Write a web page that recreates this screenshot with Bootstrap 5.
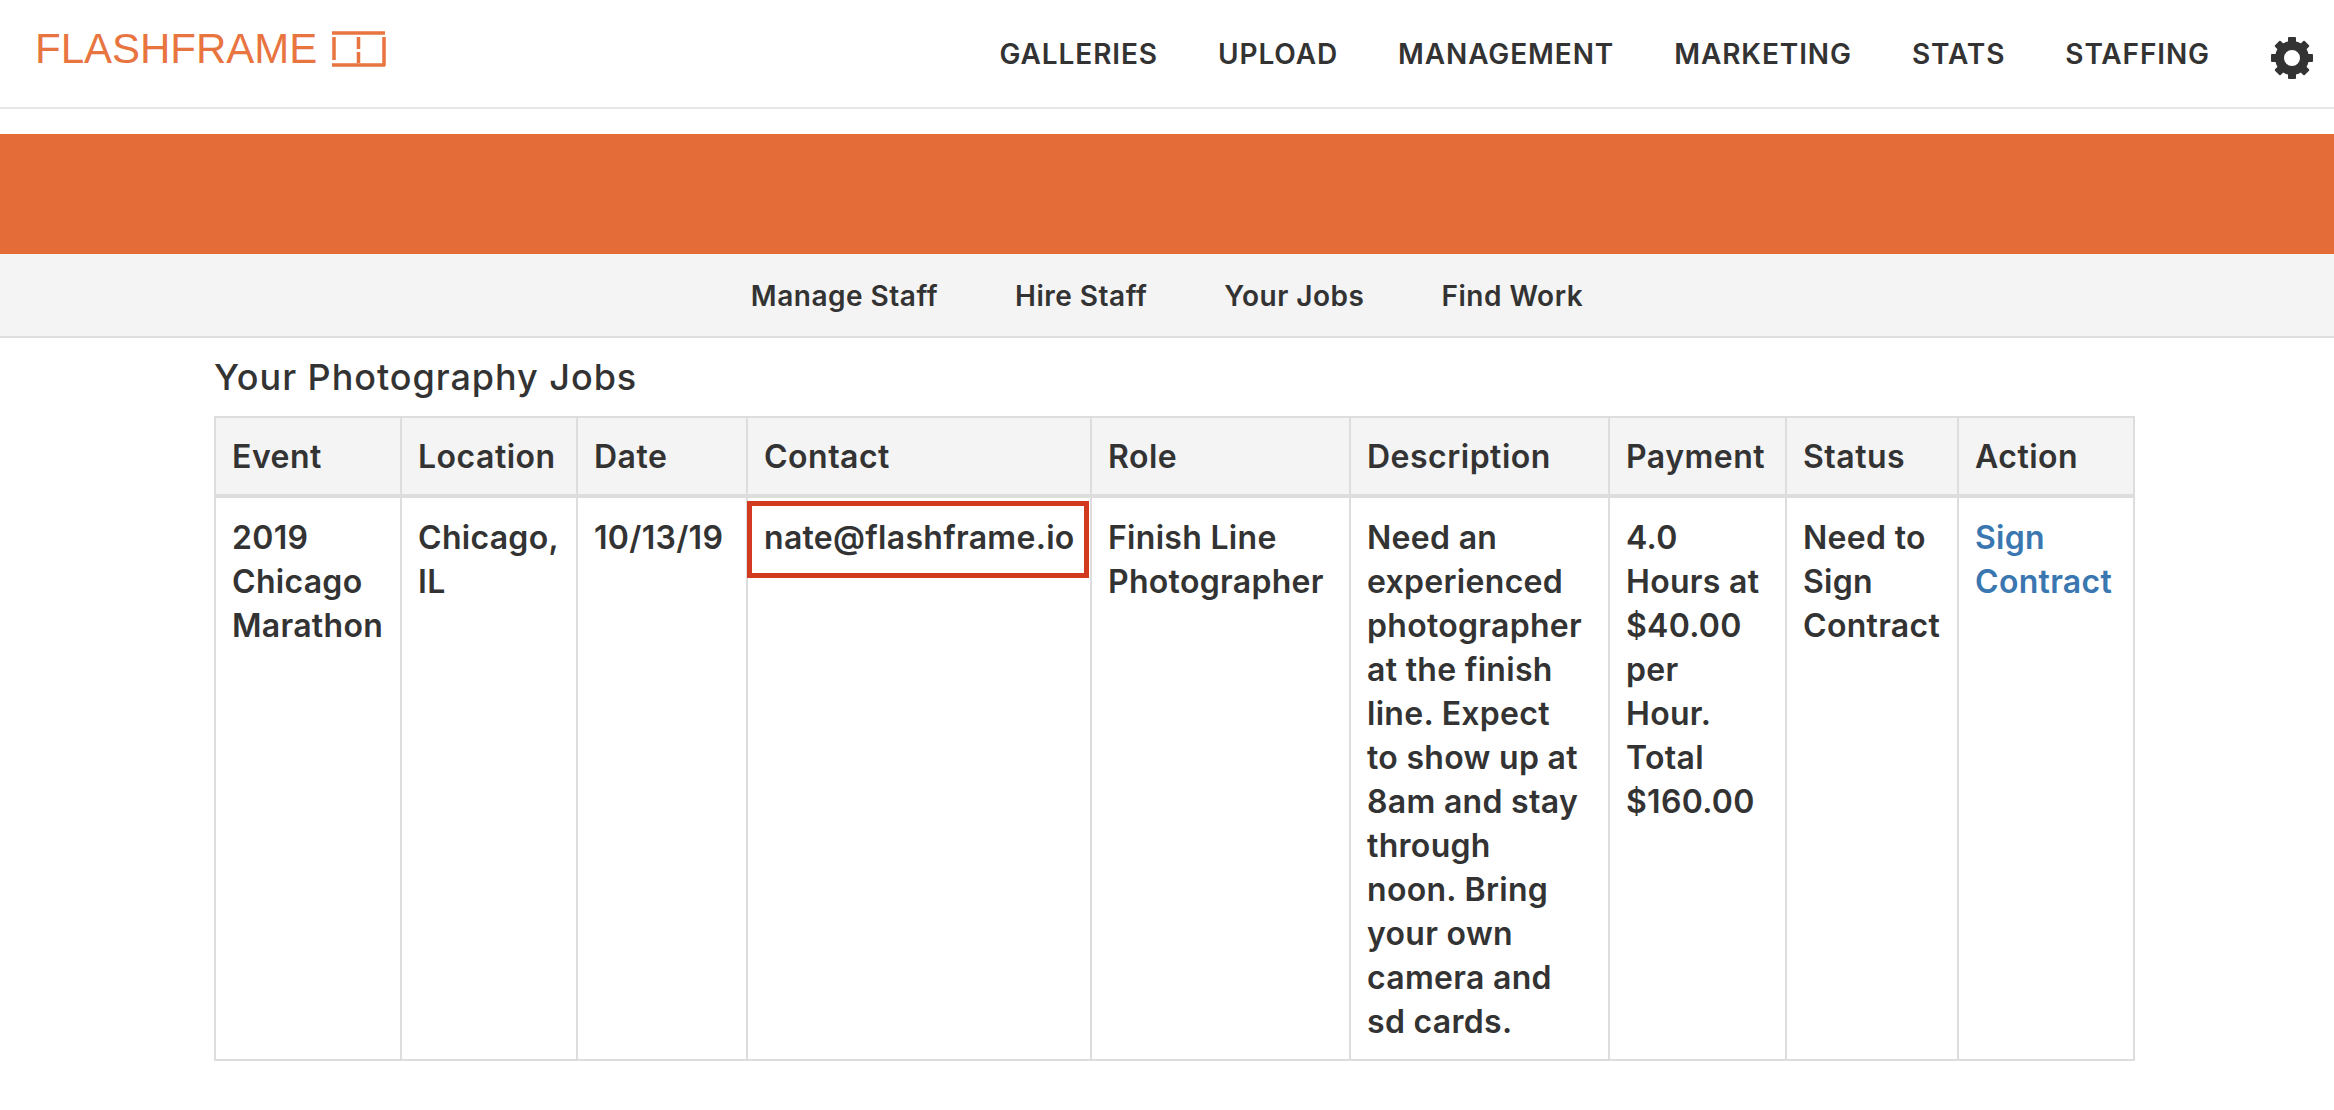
<!DOCTYPE html>
<html lang="en"><head><meta charset="utf-8"><title>Flashframe</title>
<link href="https://cdn.jsdelivr.net/npm/bootstrap@5.3.0/dist/css/bootstrap.min.css" rel="stylesheet">
<style>
body{font-family:Inter,"Liberation Sans",sans-serif;color:#333;background:#fff;font-size:32px;line-height:44px;font-weight:600}
.topbar{height:109px;border-bottom:2px solid #e7e7e7;padding:0 21px 0 35px}
.brand{font-family:"Liberation Sans",Arial,sans-serif;font-size:42px;line-height:48px;color:#e8743f;font-weight:400;text-decoration:none}
.brand-row{padding-top:25px;gap:14px}
.brand-row svg{display:block}
.mainnav{gap:60px;padding-top:32px}
.mainnav a{color:#333;text-decoration:none;font-size:28px;line-height:44px;font-weight:600;letter-spacing:.9px}
.gear{margin-left:1px;margin-top:5px}
.band{height:120px;background:#e36c39;margin-top:25px}
.subnav{height:84px;background:#f4f4f4;border-bottom:2px solid #dedede;gap:77px;padding-top:2px}
.subnav a{color:#333;text-decoration:none;font-size:28px;font-weight:600;letter-spacing:.5px}
.wrap{padding:0 201px 0 214px}
.title{font-size:36px;line-height:40px;font-weight:500;letter-spacing:.95px;margin:19px 0 19px}
.jobs{table-layout:fixed;width:1919px;margin:0;border-color:#ddd;color:#333}
.jobs th,.jobs td{border:2px solid #ddd;padding:18px 17px 15px 16px;font-size:32px;line-height:44px;font-weight:600;letter-spacing:.3px;color:#333;box-shadow:none;background:#fff}
.jobs th{background:#f4f4f4;font-weight:600;letter-spacing:.5px;border-bottom-width:4px;padding:17px 17px 15px 16px}
.jobs td{height:562px;vertical-align:top}
.jobs a{color:#3a77b0;text-decoration:none}
.c1{width:186px}.c2{width:176px}.c3{width:170px}.c4{width:344px}.c5{width:259px}.c6{width:259px}.c7{width:177px}.c8{width:172px}.c9{width:176px}
.hilite{position:absolute;left:-1px;top:3px;width:342px;height:77px;border:5px solid #d23a20;pointer-events:none}
.cell-rel{position:relative}
</style></head>
<body>
<header class="topbar d-flex justify-content-between align-items-start">
  <div class="brand-row d-flex align-items-center">
    <a class="brand" href="#">FLASHFRAME</a>
    <svg width="55" height="36" viewBox="0 0 55 36" fill="none" stroke="#e8743f" stroke-width="3.5"><path d="M1 2H54M53 6V35M1 34H54M3 6V29M27.500 6V18M27.500 21V32"/></svg>
  </div>
  <nav class="mainnav d-flex align-items-start">
    <a href="#">GALLERIES</a><a href="#">UPLOAD</a><a href="#">MANAGEMENT</a><a href="#">MARKETING</a><a href="#">STATS</a><a href="#">STAFFING</a>
    <svg class="gear" width="42" height="42" viewBox="0 0 42 42" fill="#333"><path fill-rule="evenodd" d="M21 4a17 17 0 1 0 0 34a17 17 0 1 0 0-34zM21 13a8 8 0 1 1 0 16a8 8 0 1 1 0-16z"/><g><rect x="17" y="0" width="8" height="7" rx="1"/><rect x="17" y="35" width="8" height="7" rx="1"/><rect x="0" y="17" width="7" height="8" rx="1"/><rect x="35" y="17" width="7" height="8" rx="1"/><rect x="17" y="0" width="8" height="7" rx="1" transform="rotate(45 21 21)"/><rect x="17" y="35" width="8" height="7" rx="1" transform="rotate(45 21 21)"/><rect x="0" y="17" width="7" height="8" rx="1" transform="rotate(45 21 21)"/><rect x="35" y="17" width="7" height="8" rx="1" transform="rotate(45 21 21)"/></g></svg>
  </nav>
</header>
<div class="band"></div>
<nav class="subnav d-flex justify-content-center align-items-center">
  <a href="#">Manage Staff</a><a href="#">Hire Staff</a><a href="#">Your Jobs</a><a href="#">Find Work</a>
</nav>
<main class="wrap">
  <h1 class="title">Your Photography Jobs</h1>
  <table class="table jobs">
    <colgroup><col class="c1"><col class="c2"><col class="c3"><col class="c4"><col class="c5"><col class="c6"><col class="c7"><col class="c8"><col class="c9"></colgroup>
    <thead><tr><th>Event</th><th>Location</th><th>Date</th><th>Contact</th><th>Role</th><th>Description</th><th>Payment</th><th>Status</th><th>Action</th></tr></thead>
    <tbody><tr>
      <td>2019 Chicago Marathon</td><td>Chicago, IL</td><td>10/13/19</td>
      <td class="cell-rel">nate@flashframe.io<span class="hilite"></span></td>
      <td>Finish Line Photographer</td>
      <td>Need an experienced photographer at the finish line. Expect<br>to show up at 8am and stay through<br>noon. Bring your own camera and<br>sd cards.</td>
      <td>4.0 Hours at $40.00 per Hour. Total $160.00</td>
      <td>Need to Sign Contract</td>
      <td><a href="#">Sign Contract</a></td>
    </tr></tbody>
  </table>
</main>
<script src="https://cdn.jsdelivr.net/npm/bootstrap@5.3.0/dist/js/bootstrap.bundle.min.js"></script>
</body></html>
